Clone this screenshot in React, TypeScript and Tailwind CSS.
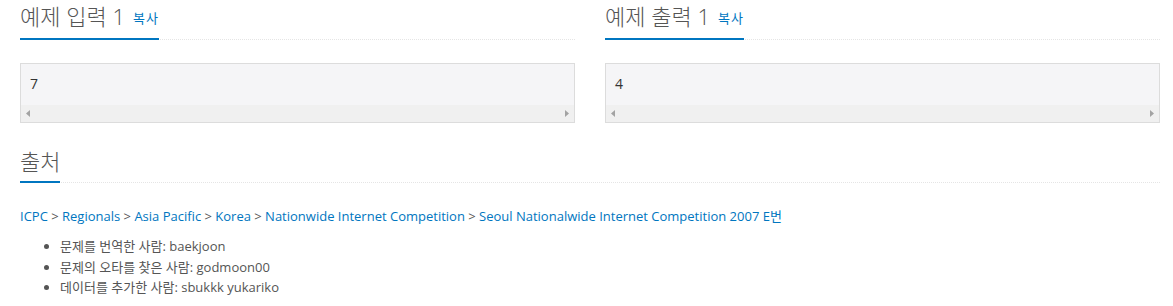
import React from "react";

const font = "font-['Open_Sans','Noto_Sans_CJK_KR',sans-serif]";

function Headline({ title, copy }: { title: string; copy?: boolean }) {
  return (
    <div className="border-b border-dotted border-[#e5e5e5]">
      <h2 className="inline-block -mb-px border-b-2 border-[#0076c0] pt-[2px] pb-[6px] text-[22px] leading-[28px] font-light text-[#555]">
        {title}
        {copy && (
          <span className="ml-[8px] text-[13px] font-normal tracking-[1px] text-[#0076c0] align-[2px]">복사</span>
        )}
      </h2>
    </div>
  );
}

function Arrow({ dir }: { dir: "left" | "right" }) {
  return (
    <svg width="4" height="7" viewBox="0 0 4 7" className="fill-[#a3a3a3]">
      {dir === "left" ? <path d="M4 0 L0 3.5 L4 7 Z" /> : <path d="M0 0 L4 3.5 L0 7 Z" />}
    </svg>
  );
}

function SampleBox({ value }: { value: string }) {
  return (
    <div className="mt-[23px] border border-[#dcdcdc] bg-[#f5f5f7]">
      <pre className={`${font} h-[41px] px-[9px] pt-[10px] text-[14px] leading-[20px] text-[#333]`}>{value}</pre>
      <div className="flex h-[17px] items-center justify-between bg-[#f0f0f0] px-[5px]">
        <Arrow dir="left" />
        <Arrow dir="right" />
      </div>
    </div>
  );
}

const crumbs = [
  "ICPC",
  "Regionals",
  "Asia Pacific",
  "Korea",
  "Nationwide Internet Competition",
  "Seoul Nationalwide Internet Competition 2007 E번",
];

export default function App() {
  return (
    <div className={`${font} min-h-[306px] bg-white pl-[20px] pr-[13px] text-[#555]`}>
      <div className="flex gap-[30px]">
        <div className="flex-1">
          <Headline title="예제 입력 1" copy />
          <SampleBox value="7" />
        </div>
        <div className="flex-1">
          <Headline title="예제 출력 1" copy />
          <SampleBox value="4" />
        </div>
      </div>

      <div className="mt-[22px]">
        <Headline title="출처" />
      </div>

      <p className="mt-[23px] text-[13px] leading-[20px]">
        {crumbs.map((c, i) => (
          <React.Fragment key={c}>
            {i > 0 && <span className="text-[#555]"> &gt; </span>}
            <a className="text-[#0076c0]">{c}</a>
          </React.Fragment>
        ))}
      </p>

      <ul className="mt-[10px] list-disc pl-[40px] text-[13px] leading-[20.5px] text-[#555]">
        <li>문제를 번역한 사람: baekjoon</li>
        <li>문제의 오타를 찾은 사람: godmoon00</li>
        <li>데이터를 추가한 사람: sbukkk yukariko</li>
      </ul>
    </div>
  );
}
